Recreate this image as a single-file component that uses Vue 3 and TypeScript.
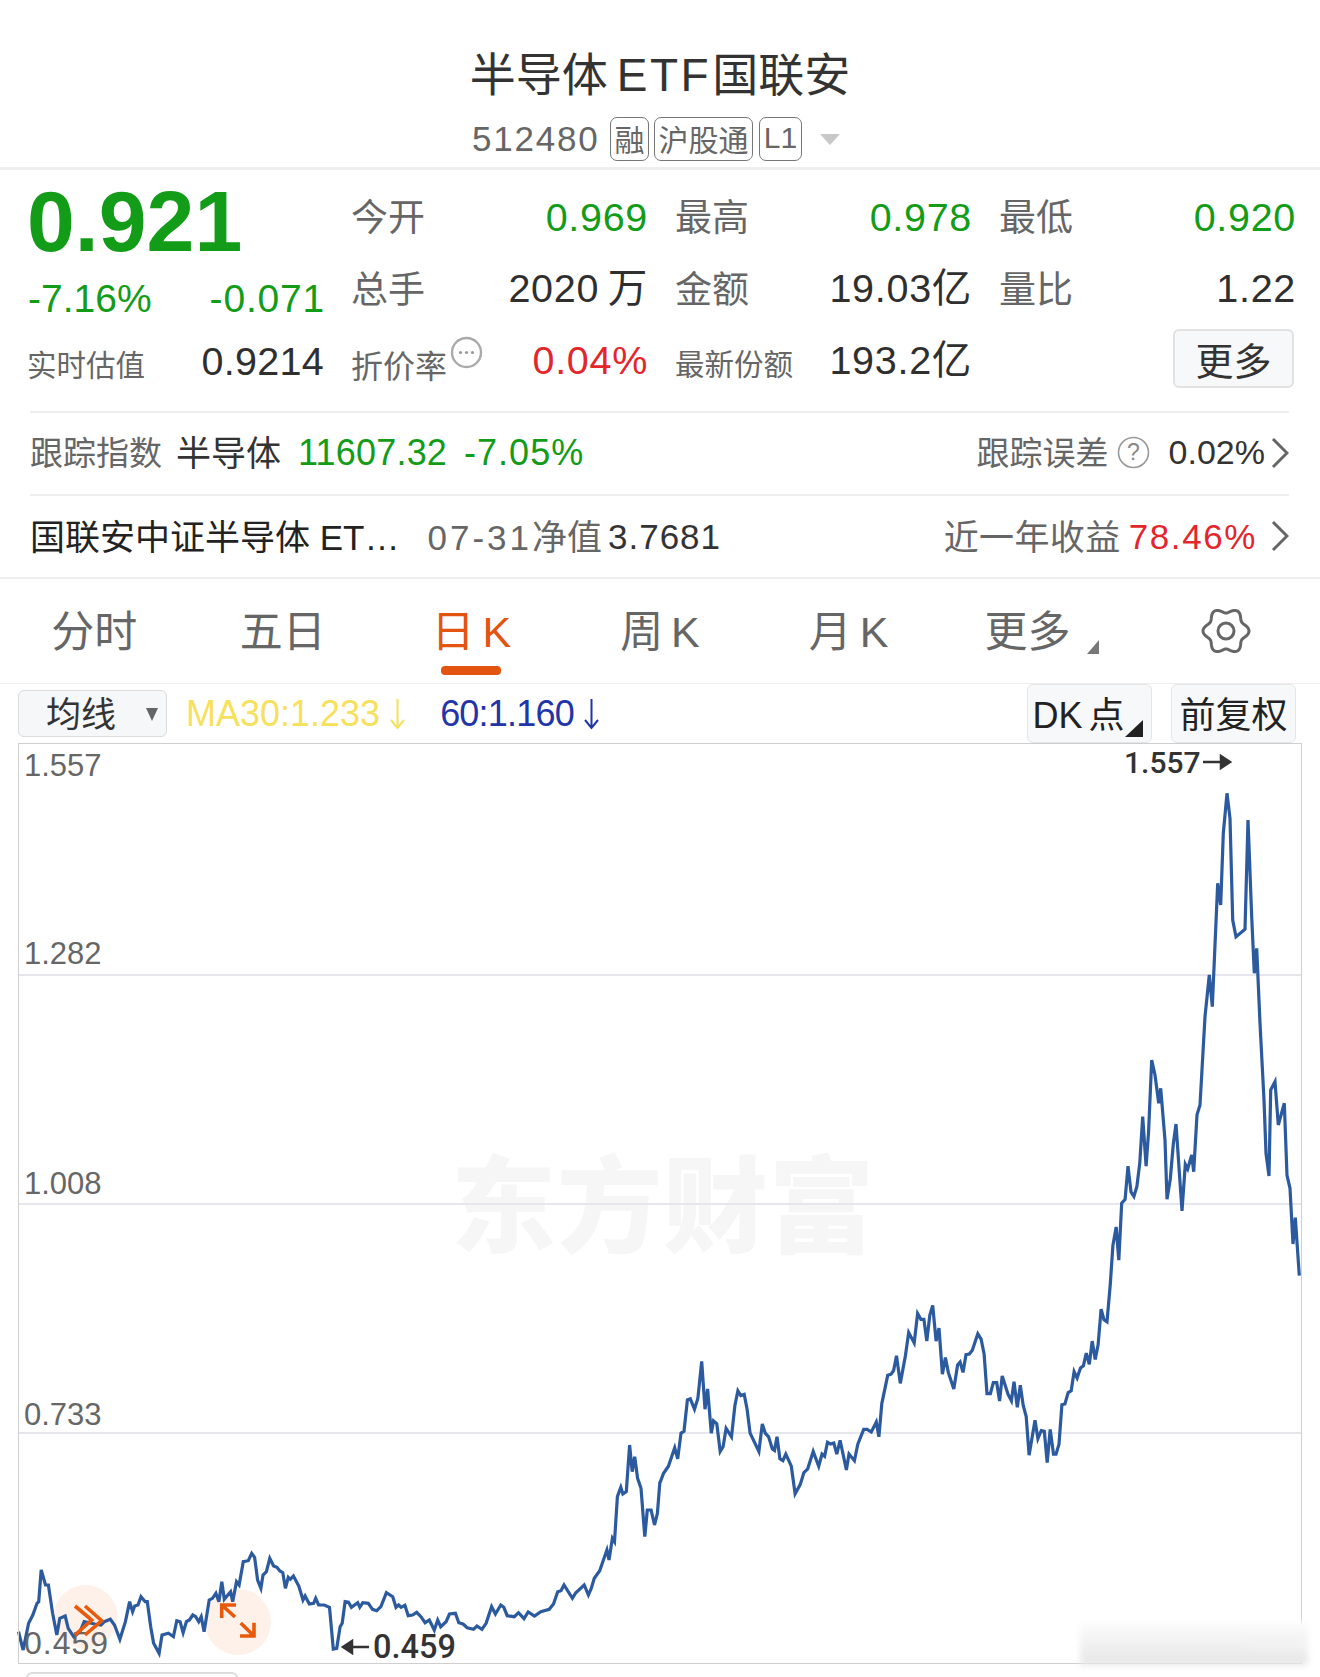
<template>
  <div class="page">
    <header class="head">
      <h1 class="title">半导体<span class="etf">ETF</span>国联安</h1>
      <div class="sub">
        <span class="code">512480</span>
        <span class="tag tag-rong">融</span>
        <span class="tag tag-hgt">沪股通</span>
        <span class="tag tag-l1">L1</span>
        <i class="caret"></i>
      </div>
    </header>

    <section class="stats">
      <div class="quote">
        <div class="price green">0.921</div>
        <div class="change green"><span>-7.16%</span><span>-0.071</span></div>
        <div class="estimate"><span class="label small">实时估值</span><span class="val">0.9214</span></div>
      </div>
      <div v-for="s in stats" :key="s.label" class="cell">
        <span class="label">{{ s.label }}</span>
        <span class="val" :class="s.tone">{{ s.value }}</span>
      </div>
      <div class="cell">
        <span class="label mid">折价率</span>
        <svg class="dots-icon" viewBox="0 0 33 33" width="33" height="33">
          <circle cx="16.5" cy="16.5" r="14.5" fill="none" stroke="#aaa" stroke-width="2.4" />
          <circle cx="10.5" cy="16.5" r="1.6" fill="#999" />
          <circle cx="16.5" cy="16.5" r="1.6" fill="#999" />
          <circle cx="22.5" cy="16.5" r="1.6" fill="#999" />
        </svg>
        <span class="val low red">0.04%</span>
      </div>
      <div class="cell">
        <span class="label small">最新份额</span>
        <span class="val low">193.2亿</span>
      </div>
      <div class="cell">
        <button class="more-btn">更多</button>
      </div>
    </section>

    <div class="info-row">
      <span class="track-label">跟踪指数</span>
      <span class="track-name">半导体</span>
      <span class="track-num green">11607.32</span>
      <span class="track-pct green">-7.05%</span>
      <span class="track-label push">跟踪误差</span>
      <svg class="help" viewBox="0 0 33 33" width="33" height="33">
        <circle cx="16.5" cy="16.5" r="15" fill="none" stroke="#999" stroke-width="1.6" />
        <text x="16.5" y="24" text-anchor="middle" class="help-mark">?</text>
      </svg>
      <span class="track-err">0.02%</span>
      <svg class="chev" viewBox="0 0 18 32" width="18" height="32"><path d="M2 2 L16 16 L2 30" /></svg>
    </div>

    <div class="info-row">
      <span class="fund-name">国联安中证半导体 ET…</span>
      <span class="fund-date"><span class="fund-day">07-31</span>净值</span>
      <span class="fund-nav">3.7681</span>
      <span class="fund-year push">近一年收益</span>
      <span class="fund-ret red">78.46%</span>
      <svg class="chev" viewBox="0 0 18 32" width="18" height="32"><path d="M2 2 L16 16 L2 30" /></svg>
    </div>

    <nav class="tabs">
      <div v-for="t in tabs" :key="t" class="tab" :class="{ active: t === '日 K', more: t === '更多' }">
        {{ t }}<i v-if="t === '更多'" class="tab-corner"></i>
      </div>
      <div class="tab gear">
        <svg viewBox="0 0 52 48" width="52" height="48">
          <path :d="gearPath" fill="none" stroke="#666" stroke-width="3" />
          <circle cx="26" cy="24" r="8" fill="none" stroke="#666" stroke-width="3" />
        </svg>
      </div>
    </nav>

    <div class="ma-row">
      <div class="select">均线<i class="select-caret"></i></div>
      <span class="ma30">MA30:1.233</span>
      <svg class="ma-arrow" viewBox="0 0 15 32" width="15" height="32" stroke="#f7e05b"><path d="M7.5 1 V30 M1 22 L7.5 30 L14 22" /></svg>
      <span class="ma60">60:1.160</span>
      <svg class="ma-arrow" viewBox="0 0 15 32" width="15" height="32" stroke="#2235a8"><path d="M7.5 1 V30 M1 22 L7.5 30 L14 22" /></svg>
      <div class="opt-btn dk">DK 点<i class="dk-corner"></i></div>
      <div class="opt-btn fq">前复权</div>
    </div>

    <div class="plot">
      <svg class="chart" viewBox="18 743 1284 921" width="1284" height="921">
        <text x="451" y="1244" class="watermark">东方财富</text>
        <line v-for="y in gridLines" :key="y" x1="18" x2="1302" :y1="y" :y2="y" class="grid" />
        <circle cx="85.5" cy="1617" r="32" fill="#fdf1ea" />
        <circle cx="238" cy="1622" r="33" fill="#fdf1ea" />
        <polyline :points="linePoints" class="price-line" />
        <text v-for="a in axis" :key="a.text" x="24" :y="a.y" class="axis" :class="{ wide: a.text === '0.459' }">{{ a.text }}</text>
        <text x="1124" y="773" class="extreme">1.557</text>
        <path d="M1203 762 H1226 M1221 756 L1230 762 L1221 768 Z" class="mark-arrow" />
        <text x="373" y="1658" class="extreme low-mark">0.459</text>
        <path d="M369 1647 H347 M352 1641 L343 1647 L352 1653 Z" class="mark-arrow" />
        <path d="M75 1606 L91.7 1620 L75 1635 M85 1606 L101.7 1620.7 L85 1635" class="orange-icon" />
        <path d="M236 1605 H221.7 V1618 M221.7 1605 L235 1617 M240 1636 H254 V1622.7 M254 1636 L240.7 1623" class="orange-icon" />
      </svg>
      <div class="smudge"></div>
    </div>

    <div class="bottom-box"></div>
  </div>
</template>

<script setup lang="ts">
interface Stat {
  label: string
  value: string
  tone?: string
}

const stats: Stat[] = [
  { label: '今开', value: '0.969', tone: 'green' },
  { label: '最高', value: '0.978', tone: 'green' },
  { label: '最低', value: '0.920', tone: 'green' },
  { label: '总手', value: '2020 万' },
  { label: '金额', value: '19.03亿' },
  { label: '量比', value: '1.22' }
]

const tabs = ['分时', '五日', '日 K', '周 K', '月 K', '更多']

const gridLines = [975, 1204, 1433]

const axis = [
  { text: '1.557', y: 776 },
  { text: '1.282', y: 964 },
  { text: '1.008', y: 1194 },
  { text: '0.733', y: 1425 },
  { text: '0.459', y: 1654 }
]

// 折れ線の座標は3つの区間に分けて持つ
const leftPart = [
  [44, 845], [55, 900], [68, 820], [78, 795], [88, 760], [92, 755], [98, 660], [108, 705], [115, 705], [125, 790],
  [135, 855], [142, 805], [155, 798], [162, 835], [175, 860], [190, 845], [200, 815], [225, 822], [240, 825], [248, 815],
  [262, 808], [272, 825], [285, 868], [298, 815], [308, 755], [315, 785], [320, 768], [328, 765], [335, 740], [345, 755],
  [350, 755], [358, 830], [365, 880], [378, 910], [385, 855], [400, 850], [412, 860], [420, 812], [428, 815], [435, 848],
  [443, 815], [450, 810], [458, 795], [465, 800], [472, 815], [478, 800], [485, 845], [497, 750], [505, 745], [513, 730],
  [520, 755], [527, 695], [533, 748], [548, 725], [553, 755], [562, 695], [568, 705], [578, 635], [590, 632], [598, 610],
  [605, 622], [612, 690], [620, 715], [625, 675], [633, 665], [641, 625], [650, 648], [658, 652], [665, 663], [672, 668],
  [678, 715], [685, 682], [690, 688], [697, 678], [710, 708], [720, 750], [725, 738], [735, 762], [745, 760], [750, 745],
  [757, 765], [770, 765], [783, 772], [792, 897], [800, 895], [808, 830], [813, 820], [820, 755], [828, 757], [835, 772],
  [850, 758], [855, 772], [862, 758], [875, 760], [885, 778], [895, 782], [905, 770], [918, 728], [933, 740], [941, 772],
  [947, 765], [953, 772], [962, 766], [970, 797], [980, 795], [990, 787], [1000, 800], [1010, 818], [1020, 810], [1032, 840],
  [1040, 810], [1047, 830], [1060, 815], [1068, 792], [1082, 790], [1090, 818], [1100, 822], [1110, 833], [1125, 838], [1133, 828],
  [1145, 838], [1155, 820], [1168, 770], [1177, 792], [1190, 765], [1197, 772], [1205, 797], [1222, 800], [1232, 788], [1245, 806],
  [1255, 786], [1270, 798], [1285, 785], [1305, 778], [1315, 762], [1325, 725], [1333, 722], [1340, 705], [1360, 745], [1368, 728],
  [1388, 705], [1398, 735], [1405, 715], [1412, 685], [1425, 662], [1442, 600], [1447, 630], [1455, 565], [1460, 575], [1467, 440],
  [1475, 412], [1480, 432], [1488, 425], [1496, 285], [1502, 365], [1508, 320], [1515, 385], [1523, 415], [1532, 560], [1538, 480],
  [1547, 480], [1555, 525], [1562, 490], [1568, 395]
]

const midPart = [
  [0, 1040], [8, 1015], [20, 995], [35, 945], [42, 975], [50, 905], [57, 900], [65, 815], [72, 812], [82, 840],
  [90, 810], [99, 710], [107, 840], [113, 785], [122, 905], [127, 872], [135, 880], [143, 955], [150, 942], [157, 892],
  [170, 915], [178, 830], [185, 790], [192, 803], [200, 800], [207, 840], [214, 905], [235, 955], [243, 880], [250, 905],
  [258, 915], [267, 948], [272, 952], [278, 915], [285, 975], [292, 980], [299, 962], [312, 995], [321, 1070], [333, 1045],
  [342, 1012], [351, 1002], [364, 955], [377, 995], [385, 962], [391, 968], [398, 930], [405, 935], [413, 932], [420, 962],
  [428, 925], [443, 1005], [449, 962], [462, 980], [470, 935], [484, 895], [492, 895], [502, 902], [514, 875], [520, 915],
  [527, 825], [541, 748], [549, 745], [555, 735], [562, 695], [571, 770], [583, 695], [591, 632], [604, 660], [612, 580],
  [620, 596], [627, 596], [634, 655], [641, 585], [648, 558], [656, 655], [663, 620], [671, 745], [678, 700], [685, 740],
  [698, 785], [707, 720], [713, 712], [720, 740], [727, 692], [735, 690], [742, 680], [755, 635], [763, 650], [770, 690],
  [777, 798], [785, 798], [792, 768], [800, 768], [807, 818], [813, 750], [827, 800], [835, 817], [841, 765], [849, 835],
  [856, 775], [863, 830], [870, 860], [877, 965], [891, 870], [898, 920], [906, 898], [913, 900], [920, 985], [927, 895],
  [935, 962], [941, 962], [948, 935], [955, 828], [962, 826], [970, 795], [977, 790], [984, 738], [991, 755], [999, 728],
  [1006, 722], [1013, 688], [1020, 718], [1027, 655], [1034, 705], [1041, 665], [1048, 568], [1055, 597], [1062, 603], [1070, 500],
  [1076, 395], [1084, 345], [1090, 435], [1097, 280], [1105, 270], [1112, 180], [1119, 250], [1126, 262], [1133, 235], [1140, 170],
  [1147, 45], [1155, 180], [1161, 85]
]

const topPart = [
  [305, 960], [315, 1005], [326, 1090], [332, 1045], [345, 1200], [351, 1378], [361, 1317], [370, 1212], [378, 1152], [396, 1413],
  [406, 1273], [413, 1287], [425, 1245], [431, 1295], [441, 1124], [450, 1095], [465, 830], [478, 705], [487, 800], [503, 430],
  [512, 495], [520, 280], [531, 160], [540, 235], [548, 540], [558, 590], [585, 568], [594, 240], [605, 530], [613, 700],
  [620, 625], [630, 850], [642, 1080], [648, 1240], [657, 1308], [662, 1050], [675, 1025], [685, 1155], [703, 1090], [711, 1306],
  [720, 1345], [729, 1512], [736, 1433], [748, 1607]
]

const linePoints = [
  ...leftPart.map(([x, y]) => [x / 2.376, 1350 + y / 3]),
  ...midPart.map(([x, y]) => [660 + x / 2.376, 1100 + y / 2.717]),
  ...topPart.map(([x, y]) => [1050 + x / 3, 740 + y / 3])
]
  .map(([x, y]) => `${x.toFixed(1)},${y.toFixed(1)}`)
  .join(' ')

// 6枚の波形の歯車
function buildGear(): string {
  const pts: string[] = []
  for (let i = 0; i < 120; i++) {
    const a = (i / 120) * Math.PI * 2
    const r = 20.5 + 2.5 * Math.cos(6 * a)
    pts.push(`${(26 + r * Math.cos(a)).toFixed(2)} ${(24 + r * Math.sin(a)).toFixed(2)}`)
  }
  return `M${pts.join(' L')} Z`
}

const gearPath = buildGear()
</script>

<style scoped>
.page {
  position: relative;
  width: 1320px;
  height: 1677px;
  overflow: hidden;
  background: #fff;
  color: #2b2b2b;
  font-family: 'Liberation Sans', 'Noto Sans CJK SC', sans-serif;
}

.green { color: #129c18; }
.red { color: #e2262c; }

.head {
  height: 119px;
  padding-top: 48px;
  border-bottom: 3px solid #eeeeee;
}

.title {
  margin: 0;
  height: 56px;
  line-height: 54px;
  font-size: 46px;
  font-weight: 400;
  text-align: center;
  color: #333;
}

.etf {
  margin: 0 1px 0 9px;
  letter-spacing: 2.5px;
}

.sub {
  display: flex;
  align-items: center;
  height: 44px;
  margin-top: 13px;
  padding-left: 472px;
  color: #666;
}

.code {
  width: 138px;
  font-size: 35px;
  letter-spacing: 1.8px;
}

.tag {
  display: flex;
  justify-content: center;
  align-items: center;
  height: 44px;
  box-sizing: border-box;
  padding-bottom: 2px;
  border: 1.5px solid #777;
  border-radius: 7px;
  font-size: 30px;
  color: #666;
}

.tag-rong { width: 39px; }
.tag-hgt { width: 99px; margin-left: 5px; }
.tag-l1 { width: 43px; margin-left: 6px; }

.caret {
  margin-left: 18px;
  border-left: 10px solid transparent;
  border-right: 10px solid transparent;
  border-top: 11px solid #c8c8c8;
}

.stats {
  display: grid;
  grid-template-columns: repeat(4, 293px);
  grid-template-rows: 70px 71px 70px;
  grid-auto-flow: column;
  column-gap: 31px;
  height: 229px;
  padding: 12px 0 0 29px;
}

.stats > .quote { grid-row: 1 / 4; }

.stats > .cell:nth-child(2) { grid-area: 1 / 2; }
.stats > .cell:nth-child(3) { grid-area: 1 / 3; }
.stats > .cell:nth-child(4) { grid-area: 1 / 4; }
.stats > .cell:nth-child(5) { grid-area: 2 / 2; }
.stats > .cell:nth-child(6) { grid-area: 2 / 3; }
.stats > .cell:nth-child(7) { grid-area: 2 / 4; }
.stats > .cell:nth-child(8) { grid-area: 3 / 2; }
.stats > .cell:nth-child(9) { grid-area: 3 / 3; }
.stats > .cell:nth-child(10) { grid-area: 3 / 4; }

.stats > .cell:nth-child(n+5):nth-child(-n+7) .label { padding-bottom: 1px; }

.quote {
  display: grid;
  grid-template-rows: 78px 78px 48px;
  align-items: center;
}

.price {
  margin-left: -2px;
  font-size: 86px;
  font-weight: 700;
  line-height: 78px;
}

.change {
  display: flex;
  justify-content: space-between;
  margin: 0 -3px 0 -1px;
  font-size: 39px;
}

.change span:last-child { letter-spacing: 0.8px; }

.estimate {
  display: flex;
  justify-content: space-between;
  align-items: center;
}

.estimate .label.small { padding-top: 2px; }

.estimate .val {
  padding-bottom: 2px;
  letter-spacing: 0.3px;
}

.cell {
  display: flex;
  align-items: center;
}

.label {
  padding-bottom: 5px;
  margin-left: -2px;
  font-size: 37px;
  color: #666;
}

.label.mid {
  font-size: 32px;
  padding-top: 12px;
  padding-bottom: 0;
}

.label.small {
  font-size: 29.5px;
  padding-top: 7px;
  padding-bottom: 0;
}

.val {
  margin-left: auto;
  margin-right: -2px;
  font-size: 39.5px;
  line-height: 46px;
  letter-spacing: 0.7px;
  word-spacing: -3px;
  color: #2f2f2f;
  white-space: nowrap;
}

.val.green { color: #129c18; }
.val.red { color: #e2262c; }

.val.low { padding-top: 4px; }

.dots-icon {
  align-self: flex-start;
  margin-top: 13px;
  margin-left: 3px;
}

.more-btn {
  margin-left: auto;
  width: 121px;
  height: 59px;
  box-sizing: border-box;
  padding: 0 0 2px;
  background: #f7f8fa;
  border: 2px solid #e2e2e2;
  border-radius: 6px;
  font-family: inherit;
  font-size: 38px;
  color: #333;
}

.info-row {
  display: flex;
  align-items: center;
  height: 81px;
  margin: 0 31px 0 30px;
  border-top: 2px solid #eeeeee;
}

.push { margin-left: auto; }

.track-label {
  padding-bottom: 6px;
  font-size: 33px;
  color: #666;
}

.track-name {
  padding-bottom: 6px;
  margin-left: 14px;
  font-size: 35px;
  color: #333;
}

.track-num {
  margin-left: 17px;
  padding-bottom: 2px;
  font-size: 36px;
  letter-spacing: 0.2px;
}

.track-pct {
  margin-left: 17px;
  padding-bottom: 2px;
  font-size: 36px;
  letter-spacing: 1px;
}

.help { margin: 0 2px 2px 8px; }

.help-mark {
  font-size: 23px;
  fill: #888;
}

.track-err {
  margin-left: 17px;
  padding-bottom: 2px;
  font-size: 34px;
  color: #333;
}

.chev {
  margin: 0 0 2px 6px;
  flex: none;
}

.chev path {
  fill: none;
  stroke: #666;
  stroke-width: 3;
}

.fund-name {
  padding-bottom: 4px;
  font-size: 35px;
  color: #222;
}

.fund-date {
  margin-left: 28px;
  padding-bottom: 4px;
  font-size: 35px;
  color: #666;
}

.fund-day { letter-spacing: 3px; }

.fund-nav {
  margin-left: 6px;
  font-size: 35px;
  letter-spacing: 1px;
  color: #333;
}

.fund-year {
  padding-bottom: 4px;
  font-size: 35px;
  letter-spacing: 0.4px;
  color: #666;
}

.fund-ret {
  margin-left: 8px;
  font-size: 35px;
  letter-spacing: 1.6px;
}

.fund-ret + .chev { margin-left: 14px; }

.tabs {
  display: flex;
  height: 104px;
  border-top: 2px solid #eeeeee;
  border-bottom: 1px solid #eeeeee;
}

.tab {
  position: relative;
  flex: 0 0 188.57px;
  box-sizing: border-box;
  display: flex;
  justify-content: center;
  align-items: center;
  padding-bottom: 6px;
  font-size: 43px;
  word-spacing: -4px;
  color: #666;
}

.tab.gear { padding-bottom: 1px; }

.tab.more { padding-right: 19px; }

.tab.active { color: #e2540f; }

.tab.active::after {
  content: '';
  position: absolute;
  left: 64px;
  bottom: 8px;
  width: 60px;
  height: 9px;
  border-radius: 4px;
  background: #e2540f;
}

.tab-corner {
  position: absolute;
  left: 144px;
  top: 61px;
  width: 0;
  height: 0;
  border-left: 12px solid transparent;
  border-bottom: 14px solid #777;
}

.ma-row {
  display: flex;
  align-items: center;
  height: 59px;
  padding-left: 18px;
}

.select {
  position: relative;
  width: 149px;
  height: 47px;
  box-sizing: border-box;
  padding-left: 27px;
  line-height: 47px;
  background: #f6f7f9;
  border: 1.5px solid #dcdcdc;
  border-radius: 6px;
  font-size: 35px;
  color: #333;
}

.select-caret {
  position: absolute;
  right: 8px;
  top: 17px;
  border-left: 6.5px solid transparent;
  border-right: 6.5px solid transparent;
  border-top: 13px solid #666;
}

.ma30 {
  margin-left: 19px;
  font-size: 36px;
  color: #f7e05b;
}

.ma60 {
  margin-left: 35px;
  font-size: 36px;
  letter-spacing: -0.8px;
  color: #2235a8;
}

.ma-arrow {
  margin-left: 10px;
  flex: none;
  fill: none;
  stroke-width: 2;
}

.opt-btn {
  display: flex;
  align-items: center;
  justify-content: center;
  height: 59px;
  width: 125px;
  box-sizing: border-box;
  padding-bottom: 3px;
  background: #f7f8fa;
  border: 1.5px solid #e6e6e6;
  border-radius: 6px;
  font-size: 36px;
  word-spacing: -4px;
  color: #222;
}

.dk {
  position: relative;
  margin-left: auto;
  padding-right: 22px;
}

.dk-corner {
  position: absolute;
  right: 8px;
  bottom: 5px;
  border-left: 18px solid transparent;
  border-bottom: 17px solid #222;
}

.fq {
  margin-left: 19px;
  margin-right: 24px;
}

.plot {
  position: relative;
  width: 1284px;
  height: 921px;
  margin-left: 18px;
}

.chart {
  display: block;
  overflow: visible;
  outline: 1px solid #cfcfcf;
  outline-offset: -1px;
}

.watermark {
  font-size: 105px;
  font-weight: 900;
  letter-spacing: 1px;
  fill: #f6f6f6;
}

.grid {
  stroke: #e6e6ec;
  stroke-width: 2;
}

.price-line {
  fill: none;
  stroke: #2c5a9e;
  stroke-width: 3.2;
}

.axis {
  font-size: 31px;
  fill: #666;
}

.axis.wide {
  font-size: 32px;
  letter-spacing: 1px;
}

.extreme {
  font-family: Roboto, 'Liberation Sans', sans-serif;
  font-size: 30px;
  font-weight: 500;
  fill: #333;
}

.low-mark { font-size: 32.5px; }

.mark-arrow {
  fill: #333;
  stroke: #333;
  stroke-width: 2.5;
}

.orange-icon {
  fill: none;
  stroke: #e8590c;
  stroke-width: 3.6;
}

.smudge {
  position: absolute;
  right: -6px;
  bottom: -1px;
  width: 228px;
  height: 44px;
  background: linear-gradient(#fdfdfd, #e6e6e6);
  filter: blur(3px);
}

.smudge::after {
  content: '';
  position: absolute;
  right: 0;
  top: 10px;
  width: 60px;
  height: 12px;
  border-top: 2px solid #f8f8f8;
  border-bottom: 2px solid #f8f8f8;
}

.bottom-box {
  width: 208px;
  height: 12px;
  margin: 8px 0 0 26px;
  border: 2px solid #dddddd;
  border-radius: 6px 6px 0 0;
}
</style>

<style>
body {
  background: #fff;
}
</style>
